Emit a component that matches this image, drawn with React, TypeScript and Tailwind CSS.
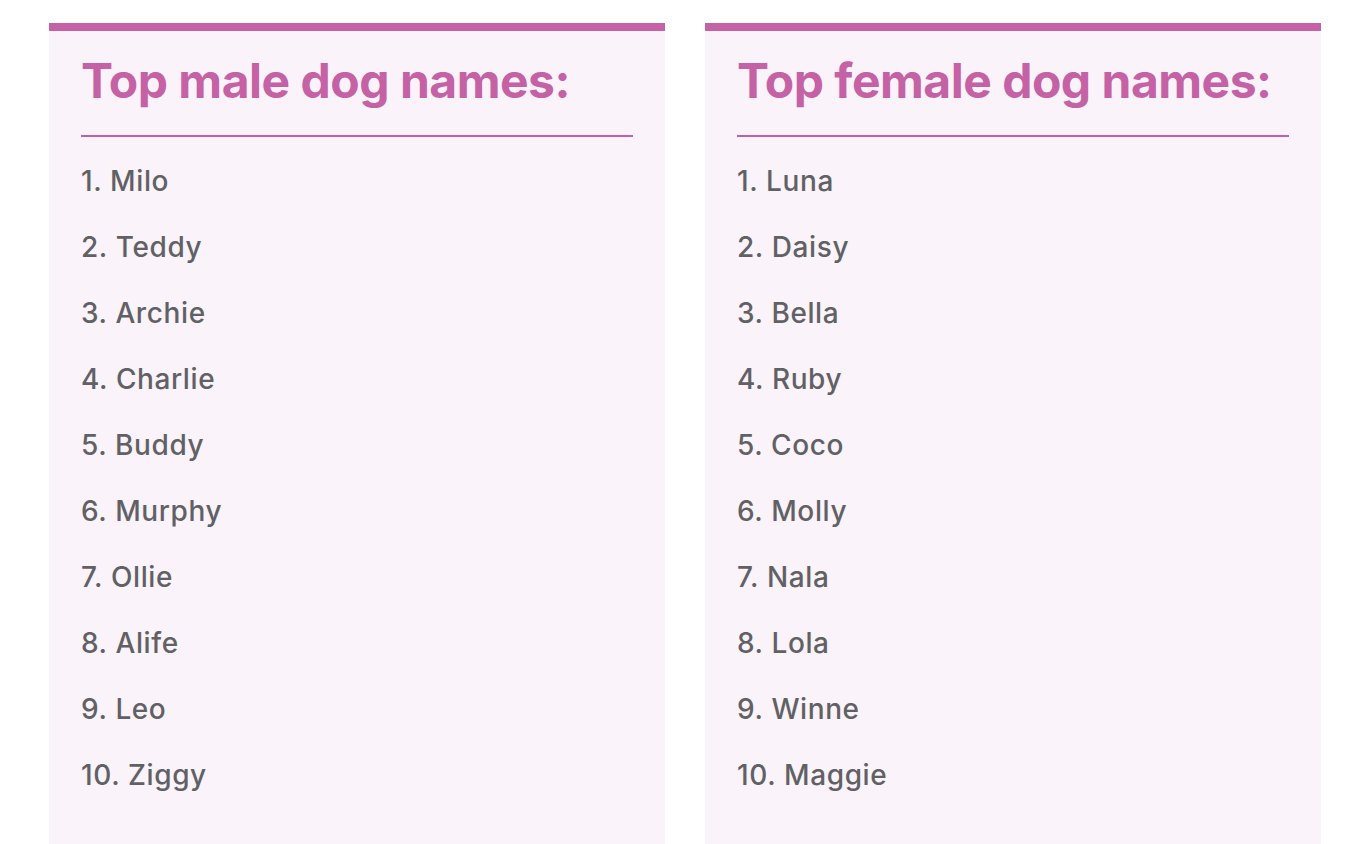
import React from "react";

const male = ["Milo", "Teddy", "Archie", "Charlie", "Buddy", "Murphy", "Ollie", "Alife", "Leo", "Ziggy"];
const female = ["Luna", "Daisy", "Bella", "Ruby", "Coco", "Molly", "Nala", "Lola", "Winne", "Maggie"];

function Card({ title, names }: { title: string; names: string[] }) {
  return (
    <div className="w-[616px] h-[821px] bg-[#faf3f9] border-t-[8px] border-[#c462a5] px-8">
      <h2 className="pt-[22px] text-[48px] leading-[56px] font-bold text-[#c462a5] tracking-[-0.5px]">{title}</h2>
      <div className="mt-[26px] h-[2px] bg-[#c462a5]" />
      <ul className="mt-[26px] flex flex-col gap-[30px]">
        {names.map((n, i) => (
          <li key={n} className="text-[28px] leading-[36px] font-medium text-[#616165] tracking-[0.6px]">
            {i + 1}. {n}
          </li>
        ))}
      </ul>
    </div>
  );
}

export default function App() {
  return (
    <div className="w-[1352px] h-[844px] bg-white overflow-hidden pt-[23px] pl-[49px] flex gap-[40px]" style={{ fontFamily: "Inter, 'Noto Sans', sans-serif" }}>
      <Card title="Top male dog names:" names={male} />
      <Card title="Top female dog names:" names={female} />
    </div>
  );
}
